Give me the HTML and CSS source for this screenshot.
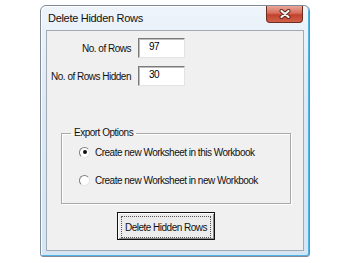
FILE: index.html
```html
<!DOCTYPE html>
<html lang="en">
<head>
  <meta charset="UTF-8">
  <title>Delete Hidden Rows</title>
  <link rel="stylesheet" href="styles.css">
</head>
<body>
  <div class="window">
    <div class="titlebar">
      <span class="title">Delete Hidden Rows</span>
      <button class="close-button" title="Close">
        <svg width="14" height="10" viewBox="0 0 14 10">
          <path d="M3.5 2 L10.5 8 M10.5 2 L3.5 8" stroke="#5a2418" stroke-width="4" stroke-linecap="round"/>
          <path d="M3.5 2 L10.5 8 M10.5 2 L3.5 8" stroke="#f4f4f4" stroke-width="2.2" stroke-linecap="round"/>
        </svg>
      </button>
    </div>
    <div class="client">
      <div class="fields">
        <label for="rows">No. of Rows</label>
        <input type="text" id="rows" value="97">
        <label for="hidden">No. of Rows Hidden</label>
        <input type="text" id="hidden" value="30">
      </div>
      <fieldset class="options">
        <legend>Export Options</legend>
        <label class="radio-row">
          <span class="radio checked"></span>
          Create new Worksheet in this Workbook
        </label>
        <label class="radio-row">
          <span class="radio"></span>
          Create new Worksheet in new Workbook
        </label>
      </fieldset>
      <button class="delete-button"><span class="focus">Delete Hidden Rows</span></button>
    </div>
  </div>
</body>
</html>
```

FILE: styles.css
```css
/* Vista style dialog */
body {
  margin: 0;
  background: #fff;
  font-family: "Liberation Sans", Arial, sans-serif;
  font-size: 10px;
  letter-spacing: -0.5px;
  color: #111;
}
.window {
  margin: 5px 0 0 40px;
  width: 268px;
  height: 250px;
  border: 1px solid #7f8a96;
  border-radius: 6px 6px 3px 3px;
  background: linear-gradient(#eef4fa, #dde9f5 40%, #d4e5f4);
  box-shadow: inset -1px -1px 0 #4fb4e4, inset 1px 1px 0 #fff;
  display: flex;
  flex-direction: column;
}
.titlebar {
  height: 24px;
  display: flex;
  justify-content: space-between;
  align-items: flex-start;
}
.title {
  font-size: 11px;
  letter-spacing: -0.3px;
  color: #111;
  padding: 6px 0 0 7px;
}
.close-button {
  width: 37px;
  height: 17px;
  margin-right: 6px;
  padding: 0;
  border: 1px solid #6e2b20;
  border-top: none;
  border-radius: 0 0 4px 4px;
  background: linear-gradient(#e9a598, #d66d59 45%, #c1412c 55%, #d0614a);
  display: flex;
  align-items: center;
  justify-content: center;
}
.client {
  flex: 1;
  margin: 0 5px 5px 5px;
  border: 1px solid #a2aab3;
  background: #f0f0f0;
}
.fields {
  display: grid;
  grid-template-columns: 84px 47px;
  column-gap: 7px;
  row-gap: 8px;
  align-items: center;
  margin-top: 7px;
}
.fields label {
  text-align: right;
}
.fields input {
  box-sizing: border-box;
  width: 47px;
  height: 20px;
  margin: 0;
  padding: 0 0 4px 10px;
  font: inherit;
  letter-spacing: inherit;
  border: 1px solid;
  border-color: #7a7a7a #e3e3e3 #e3e3e3 #7a7a7a;
  box-shadow: inset 1px 1px 0 #bdbdbd;
  background: #fff;
}
.options {
  margin: 41px 12px 0 14px;
  padding: 6px 0 16px 0;
  border: 1px solid #a9a9a9;
  box-shadow: inset 1px 1px 0 #fff, 1px 1px 0 #fff;
}
.options legend {
  margin-left: 9px;
  padding: 0 3px;
  line-height: 12px;
}
.radio-row {
  display: flex;
  align-items: center;
  gap: 5px;
  height: 14px;
  margin-left: 17px;
}
.radio-row + .radio-row {
  margin-top: 14px;
}
.radio {
  box-sizing: border-box;
  width: 11px;
  height: 11px;
  border-radius: 50%;
  border: 1px solid;
  border-color: #808080 #e6e6e6 #e6e6e6 #808080;
  background: #fff;
  display: flex;
  align-items: center;
  justify-content: center;
}
.radio.checked::after {
  content: "";
  width: 4px;
  height: 4px;
  border-radius: 50%;
  background: #111;
}
.delete-button {
  display: block;
  box-sizing: border-box;
  width: 98px;
  height: 28px;
  margin: 8px 0 0 70px;
  padding: 3px;
  border: 1px solid #111;
  background: #ececec;
  box-shadow: inset 1px 1px 0 #fff, inset -1px -1px 0 #8a8a8a;
  font: inherit;
  letter-spacing: inherit;
  color: #111;
}
.delete-button .focus {
  display: flex;
  align-items: center;
  justify-content: center;
  height: 100%;
  border: 1px dotted #555;
}
```
